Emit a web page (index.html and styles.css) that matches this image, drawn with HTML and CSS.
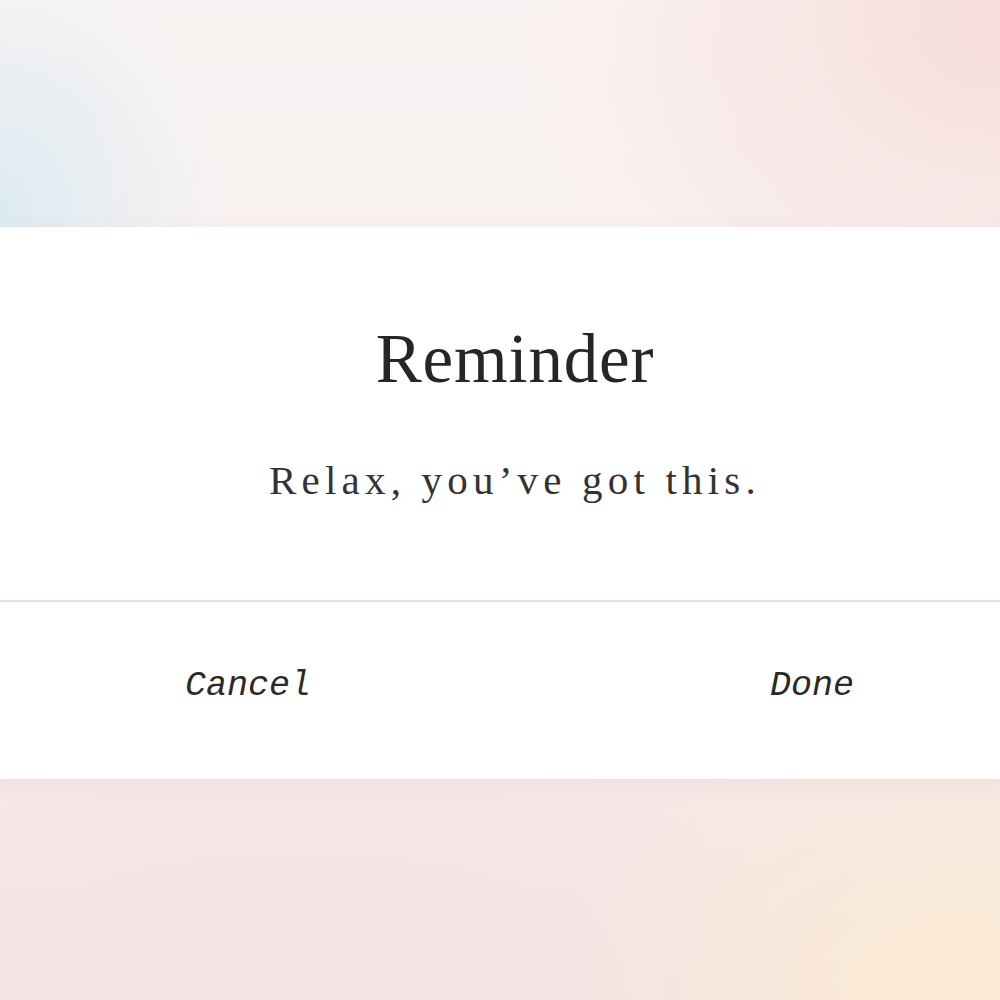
FILE: index.html
```html
<!DOCTYPE html>
<html lang="en">
<head>
<meta charset="utf-8">
<title>Reminder</title>
<link rel="stylesheet" href="styles.css">
</head>
<body>
  <div class="backdrop">
    <div class="dialog">
      <div class="dialog-body">
        <h1 class="dialog-title">Reminder</h1>
        <p class="dialog-message">Relax, you’ve got this.</p>
      </div>
      <div class="dialog-actions">
        <button class="action">Cancel</button>
        <button class="action">Done</button>
      </div>
    </div>
  </div>
</body>
</html>
```

FILE: styles.css
```css
html, body {
  margin: 0;
  padding: 0;
}

body {
  width: 1000px;
  height: 1000px;
  overflow: hidden;
}

.backdrop {
  width: 1000px;
  height: 1000px;
  box-sizing: border-box;
  padding-top: 227px;
  background:
    radial-gradient(ellipse 220px 260px at 0px 210px, rgba(220, 234, 242, 0.95), rgba(220, 234, 242, 0) 100%),
    radial-gradient(ellipse 480px 380px at 1000px 20px, rgba(246, 218, 216, 0.85), rgba(246, 218, 216, 0) 100%),
    radial-gradient(ellipse 420px 280px at 960px 990px, rgba(251, 234, 210, 1), rgba(251, 234, 210, 0) 100%),
    radial-gradient(ellipse 700px 300px at 300px 1000px, rgba(245, 226, 229, 1), rgba(245, 226, 229, 0) 100%),
    linear-gradient(180deg, #f9f4f3 0%, #f8efee 50%, #f3e4e4 100%);
}

.dialog {
  background: #ffffff;
  height: 552px;
  box-sizing: border-box;
  box-shadow: 0 6px 22px rgba(120, 90, 90, 0.06);
  display: flex;
  flex-direction: column;
}

.dialog-body {
  padding: 97px 0 0 30px;
  height: 375px;
  box-sizing: border-box;
  border-bottom: 2px solid #d4e8f2;
  text-align: center;
}

.dialog-title {
  margin: 0;
  font-family: "Liberation Serif", "DejaVu Serif", serif;
  font-weight: 400;
  font-size: 69px;
  line-height: 70px;
  color: #262626;
  letter-spacing: 0.8px;
}

.dialog-message {
  margin: 65px 0 0 0;
  font-family: "Liberation Serif", "DejaVu Serif", serif;
  font-weight: 400;
  font-size: 41px;
  line-height: 42px;
  color: #333333;
  letter-spacing: 5.2px;
}

.dialog-actions {
  flex: 1;
  display: flex;
  justify-content: space-between;
  align-items: flex-start;
  padding: 67px 146px 0 185px;
}

.action {
  margin: 0;
  padding: 0;
  border: 0;
  background: none;
  font-family: "Liberation Mono", "DejaVu Sans Mono", monospace;
  font-style: italic;
  font-size: 35px;
  line-height: 35px;
  color: #2a2a2a;
  cursor: pointer;
}
```
